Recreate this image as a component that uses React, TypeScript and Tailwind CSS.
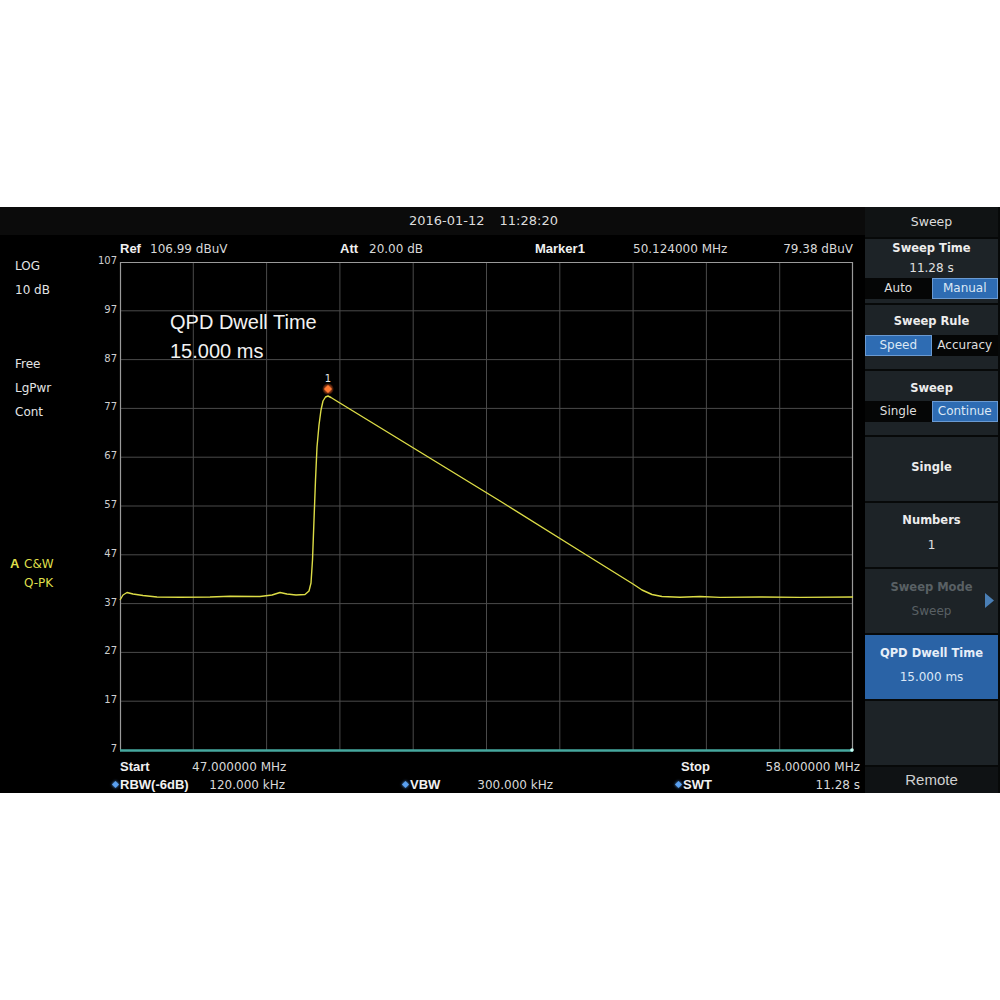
import React from "react";

const PX = 95; // svg origin x (absolute)
const PY = 262; // svg origin y (absolute)

const tracePts: [number, number][] = [
  [120, 600], [123, 595], [127, 592.5], [133, 594], [143, 595.5], [157, 597], [180, 597.3], [210, 597],
  [230, 596.3], [260, 596.5], [272, 595], [280, 592.5], [287, 594], [296, 595], [305, 594.5], [309, 591],
  [311, 583], [312.5, 560], [314, 520], [315.5, 480], [317, 447], [319, 425], [321, 410], [323, 401],
  [325.5, 397], [328, 396], [331, 397.5], [335, 400], [420, 452], [500, 501], [580, 551], [633, 584],
  [642, 590], [652, 594.5], [662, 596.5], [680, 597.3], [700, 596.5], [720, 597.4], [760, 597],
  [800, 597.4], [853, 597],
];

const traceD = tracePts
  .map(([x, y], i) => `${i === 0 ? "M" : "L"}${(x - PX).toFixed(1)} ${(y - PY).toFixed(1)}`)
  .join(" ");

const yLabels = ["107", "97", "87", "77", "67", "57", "47", "37", "27", "17", "7"];

function Chart() {
  const left = 25;
  const right = 758;
  const w = right - left;
  const h = 488;
  return (
    <svg width={770} height={496} className="block overflow-visible">
      {Array.from({ length: 9 }, (_, i) => {
        const x = left + ((i + 1) * w) / 10;
        return <line key={"v" + i} x1={x} y1={0} x2={x} y2={h} stroke="#4a4a4a" strokeWidth={1} />;
      })}
      {Array.from({ length: 9 }, (_, i) => {
        const y = ((i + 1) * h) / 10;
        return <line key={"h" + i} x1={left} y1={y} x2={right} y2={y} stroke="#4a4a4a" strokeWidth={1} />;
      })}
      <line x1={left} y1={0.5} x2={right} y2={0.5} stroke="#9a9a9a" strokeWidth={1.2} />
      <line x1={left + 0.5} y1={0} x2={left + 0.5} y2={h} stroke="#9a9a9a" strokeWidth={1.2} />
      <line x1={right - 0.5} y1={0} x2={right - 0.5} y2={h} stroke="#9a9a9a" strokeWidth={1.2} />
      {yLabels.map((t, i) => (
        <text
          key={t}
          x={left - 3}
          y={(i * h) / 10 - 1}
          textAnchor="end"
          dominantBaseline="middle"
          fill="#cfcfcf"
          fontSize={10}
          fontFamily="'DejaVu Sans', sans-serif"
        >
          {t}
        </text>
      ))}
      <line x1={left} y1={h + 0.5} x2={right} y2={h + 0.5} stroke="#46a89f" strokeWidth={2.5} />
      <circle cx={right - 1} cy={h} r={1.8} fill="#c8fff6" />
      <path d={traceD} fill="none" stroke="#dcdc46" strokeWidth={1.4} strokeLinejoin="round" />
      <defs>
        <radialGradient id="mglow">
          <stop offset="0%" stopColor="#ffb070" stopOpacity={1} />
          <stop offset="60%" stopColor="#e05a20" stopOpacity={0.6} />
          <stop offset="100%" stopColor="#e05a20" stopOpacity={0} />
        </radialGradient>
      </defs>
      <circle cx={328 - PX} cy={389 - PY} r={6} fill="url(#mglow)" />
      <polygon
        points={`${328 - PX},${385 - PY} ${332 - PX},${389 - PY} ${328 - PX},${393 - PY} ${324 - PX},${389 - PY}`}
        fill="#ff7a32"
      />
      <text
        x={328 - PX}
        y={379 - PY}
        textAnchor="middle"
        dominantBaseline="middle"
        fill="#e8e8e8"
        fontSize={10}
        fontFamily="'DejaVu Sans', sans-serif"
      >
        1
      </text>
    </svg>
  );
}

function Dot() {
  return (
    <span className="inline-block w-[5px] h-[5px] rotate-45 bg-[#5aa0f0] shadow-[0_0_3px_#5aa0f0] mr-[2px] mb-[1px]" />
  );
}

function SegButtons({ a, b, active }: { a: string; b: string; active: 0 | 1 }) {
  const on = "bg-[#2e6cb3] border border-[#6a9ad2] text-[#dce8f5]";
  const off = "bg-[#050606] text-[#dedede]";
  return (
    <div className="grid grid-cols-2 h-[21px] text-[12px] leading-[19px]">
      <div className={`flex items-center justify-center ${active === 0 ? on : off}`}>{a}</div>
      <div className={`flex items-center justify-center ${active === 1 ? on : off}`}>{b}</div>
    </div>
  );
}

const blockCls = "h-[64px] bg-[#1d2327] flex flex-col relative";
const titleCls = "text-[11.5px] font-bold leading-[16px] text-center text-[#ececec]";

function Panel() {
  return (
    <div className="w-[135px] pr-[2px] bg-[#070909] flex flex-col gap-[2px] font-['DejaVu_Sans',sans-serif]">
      <div className="h-[30px] bg-[#101314] flex items-center justify-center text-[12.5px] text-[#dcdcdc]">
        Sweep
      </div>
      <div className={blockCls}>
        <div className={`${titleCls} mt-[1px]`}>Sweep Time</div>
        <div className="mt-[4px] text-[12px] leading-[16px] text-center text-[#e0e0e0]">11.28 s</div>
        <div className="mt-[2px]">
          <SegButtons a="Auto" b="Manual" active={1} />
        </div>
      </div>
      <div className={blockCls}>
        <div className={`${titleCls} mt-[8px]`}>Sweep Rule</div>
        <div className="mt-[6px]">
          <SegButtons a="Speed" b="Accuracy" active={0} />
        </div>
      </div>
      <div className={blockCls}>
        <div className={`${titleCls} mt-[9px]`}>Sweep</div>
        <div className="mt-[5px]">
          <SegButtons a="Single" b="Continue" active={1} />
        </div>
      </div>
      <div className={`${blockCls} justify-center`}>
        <div className={`${titleCls} mb-[4px]`}>Single</div>
      </div>
      <div className={blockCls}>
        <div className={`${titleCls} mt-[9px]`}>Numbers</div>
        <div className="mt-[9px] text-[12px] leading-[16px] text-center text-[#e0e0e0]">1</div>
      </div>
      <div className={blockCls}>
        <div className="mt-[10px] text-[11.5px] font-bold leading-[16px] text-center text-[#596064]">Sweep Mode</div>
        <div className="mt-[8px] text-[12px] leading-[16px] text-center text-[#596064]">Sweep</div>
        <svg className="absolute right-[4px] top-[24px]" width={9} height={15} viewBox="0 0 9 15">
          <polygon points="0,0 9,7.5 0,15" fill="#4a7fb6" />
        </svg>
      </div>
      <div className="h-[64px] bg-[#2a63a6] flex flex-col">
        <div className="mt-[10px] text-[11.5px] font-bold leading-[16px] text-center text-[#e6eef8]">QPD Dwell Time</div>
        <div className="mt-[8px] text-[12px] leading-[16px] text-center text-[#dbe7f6]">15.000 ms</div>
      </div>
      <div className={blockCls} />
      <div className="h-[26px] bg-[#0f1214] flex items-center justify-center text-[15px] text-[#d0d0d0] font-['Liberation_Sans',sans-serif]">
        Remote
      </div>
    </div>
  );
}

export default function App() {
  const bold = "font-['Liberation_Sans',sans-serif] font-bold text-[13px] text-[#f0f0f0]";
  const val = "text-[12px] text-[#d8d8d8]";
  return (
    <div className="w-[1000px] h-[1000px] bg-white flex flex-col font-['DejaVu_Sans',sans-serif]">
      <div className="h-[207px]" />
      <div className="h-[586px] bg-black flex">
        <div className="w-[865px] flex flex-col">
          <div className="h-[28px] bg-[#0b0b0b] flex items-center justify-center pl-[102px] text-[13px] text-[#dddddd]">
            <span className="mr-[15px]">2016-01-12</span>
            <span>11:28:20</span>
          </div>
          <div className="flex h-[558px]">
            <div className="w-[95px] flex flex-col text-[12px] leading-[16px] text-[#e4e4e4]">
              <div className="pl-[15px] mt-[23px]">LOG</div>
              <div className="pl-[15px] mt-[8px]">10 dB</div>
              <div className="pl-[15px] mt-[58px]">Free</div>
              <div className="pl-[15px] mt-[8px]">LgPwr</div>
              <div className="pl-[15px] mt-[8px]">Cont</div>
              <div className="pl-[10px] mt-[136px] text-[#dede4a] flex items-baseline">
                <span className="font-['Liberation_Sans',sans-serif] font-bold text-[13px] w-[14px]">A</span>
                <span>C&amp;W</span>
              </div>
              <div className="pl-[24px] mt-[3px] text-[#dede4a]">Q-PK</div>
            </div>
            <div className="w-[770px] flex flex-col">
              <div className="h-[27px] flex items-center pl-[25px] whitespace-nowrap">
                <span className={`${bold} w-[30px]`}>Ref</span>
                <span className={`${val} w-[190px]`}>106.99 dBuV</span>
                <span className={`${bold} w-[29px]`}>Att</span>
                <span className={`${val} w-[166px]`}>20.00 dB</span>
                <span className={`${bold} w-[98px]`}>Marker1</span>
                <span className={val}>50.124000 MHz</span>
                <span className="flex-1" />
                <span className={`${val} pr-[12px]`}>79.38 dBuV</span>
              </div>
              <div className="relative h-[496px]">
                <Chart />
                <div className="absolute left-[75px] top-[46px] font-['Liberation_Sans',sans-serif] text-[20px] leading-[29px] text-[#f2f2f2]">
                  <div>QPD Dwell Time</div>
                  <div>15.000 ms</div>
                </div>
              </div>
              <div className="h-[18px] flex items-center whitespace-nowrap pl-[25px] pr-[5px]">
                <span className={`${bold} w-[72px]`}>Start</span>
                <span className={val}>47.000000 MHz</span>
                <span className="flex-1" />
                <div className="w-[179px] flex justify-between items-center">
                  <span className={bold}>Stop</span>
                  <span className={val}>58.000000 MHz</span>
                </div>
              </div>
              <div className="h-[17px] flex items-center whitespace-nowrap pl-[18px] pr-[5px]">
                <div className="w-[172px] flex justify-between items-center">
                  <span className={`${bold} text-[12.5px] flex items-center`}>
                    <Dot />
                    RBW(-6dB)
                  </span>
                  <span className={val}>120.000 kHz</span>
                </div>
                <div className="ml-[118px] w-[150px] flex justify-between items-center">
                  <span className={`${bold} text-[12.5px] flex items-center`}>
                    <Dot />
                    VBW
                  </span>
                  <span className={val}>300.000 kHz</span>
                </div>
                <span className="flex-1" />
                <div className="w-[184px] flex justify-between items-center">
                  <span className={`${bold} text-[12.5px] flex items-center`}>
                    <Dot />
                    SWT
                  </span>
                  <span className={val}>11.28 s</span>
                </div>
              </div>
            </div>
          </div>
        </div>
        <Panel />
      </div>
    </div>
  );
}
